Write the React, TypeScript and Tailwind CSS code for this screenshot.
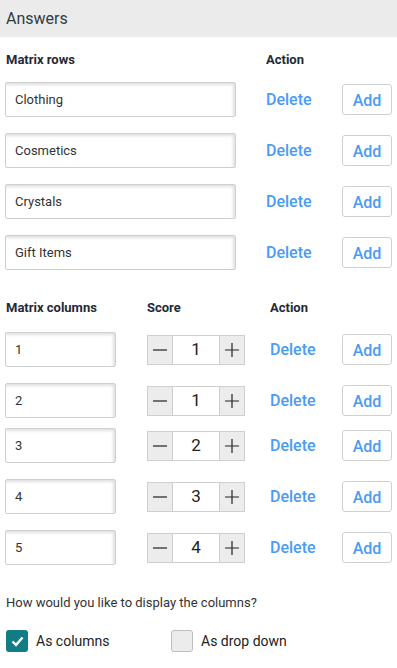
import React from 'react';

const rows = ['Clothing', 'Cosmetics', 'Crystals', 'Gift Items'];
const cols = [
  { label: '1', score: 1, mt: 'mt-0' },
  { label: '2', score: 1, mt: 'mt-[16px]' },
  { label: '3', score: 2, mt: 'mt-[10px]' },
  { label: '4', score: 3, mt: 'mt-[16px]' },
  { label: '5', score: 4, mt: 'mt-[16px]' },
];

const inputCls =
  'h-[35px] border border-[#cfcfcf] rounded-[2px] bg-white px-[9px] text-[13px] text-[#333] outline-none shadow-[inset_-2px_2px_3px_rgba(0,0,0,0.12)]';

function AddButton() {
  return (
    <button className="w-[50px] h-[31px] pt-[2px] rounded-[3px] border border-[#d0d0d0] bg-white text-[16px] font-medium text-[#4a9bf6]">
      Add
    </button>
  );
}

function Stepper({ value }: { value: number }) {
  return (
    <div className="flex h-[30px] w-[98px]">
      <button className="w-[26px] h-full bg-[#ececec] border border-[#cfcfcf] flex items-center justify-center">
        <svg width="14" height="14" viewBox="0 0 14 14">
          <path d="M0 7h14" stroke="#222" strokeWidth="1.2" />
        </svg>
      </button>
      <div className="w-[46px] h-full border-y border-[#cfcfcf] bg-white flex items-center justify-center text-[17px] text-[#222]">
        {value}
      </div>
      <button className="w-[26px] h-full bg-[#ececec] border border-[#cfcfcf] flex items-center justify-center">
        <svg width="14" height="14" viewBox="0 0 14 14">
          <path d="M0 7h14M7 0v14" stroke="#222" strokeWidth="1.2" />
        </svg>
      </button>
    </div>
  );
}

export default function App() {
  return (
    <div className="w-[397px] h-[668px] bg-white font-['Roboto',sans-serif] text-[#333] overflow-hidden">
      {/* Header */}
      <div className="h-[37px] bg-[#ebebeb] flex items-center px-[6px]">
        <span className="text-[16px] text-[#2f3b45]">Answers</span>
      </div>

      {/* Matrix rows */}
      <div className="flex items-center h-[45px] px-[6px] text-[13px] font-bold text-[#1f2a36]">
        <span className="w-[260px]">Matrix rows</span>
        <span>Action</span>
      </div>
      <div className="flex flex-col gap-[16px] pl-[5px]">
        {rows.map((r) => (
          <div key={r} className="flex items-center">
            <input className={`${inputCls} w-[231px]`} defaultValue={r} />
            <span className="ml-[30px] w-[76px] pt-[1px] text-[16px] font-medium text-[#4a9bf6]">Delete</span>
            <AddButton />
          </div>
        ))}
      </div>

      {/* Matrix columns */}
      <div className="flex items-center h-[62px] pt-[14px] px-[6px] text-[13px] font-bold text-[#1f2a36]">
        <span className="w-[141px]">Matrix columns</span>
        <span className="w-[123px]">Score</span>
        <span>Action</span>
      </div>
      <div className="flex flex-col pl-[5px]">
        {cols.map((c) => (
          <div key={c.label} className={`flex items-center ${c.mt}`}>
            <input className={`${inputCls} w-[111px]`} defaultValue={c.label} />
            <div className="ml-[31px]">
              <Stepper value={c.score} />
            </div>
            <span className="ml-[25px] w-[72px] pt-[1px] text-[16px] font-medium text-[#4a9bf6]">Delete</span>
            <AddButton />
          </div>
        ))}
      </div>

      {/* Display option */}
      <div className="h-[74px] flex items-center px-[6px] pt-[2px] text-[13px] text-[#333]">
        How would you like to display the columns?
      </div>
      <div className="flex items-center px-[6px] -mt-[9px]">
        <div className="flex items-center w-[165px]">
          <span className="w-[22px] h-[22px] rounded-[3px] bg-[#127c84] flex items-center justify-center">
            <svg width="13" height="11" viewBox="0 0 13 11">
              <path d="M1.5 5.5l3.5 3.5 6.5-7.5" fill="none" stroke="#fff" strokeWidth="2.4" />
            </svg>
          </span>
          <span className="ml-[8px] text-[14px] text-[#222]">As columns</span>
        </div>
        <div className="flex items-center">
          <span className="w-[22px] h-[22px] rounded-[3px] bg-[#ececec] border border-[#bdbdbd]" />
          <span className="ml-[8px] text-[14px] text-[#222]">As drop down</span>
        </div>
      </div>
    </div>
  );
}
